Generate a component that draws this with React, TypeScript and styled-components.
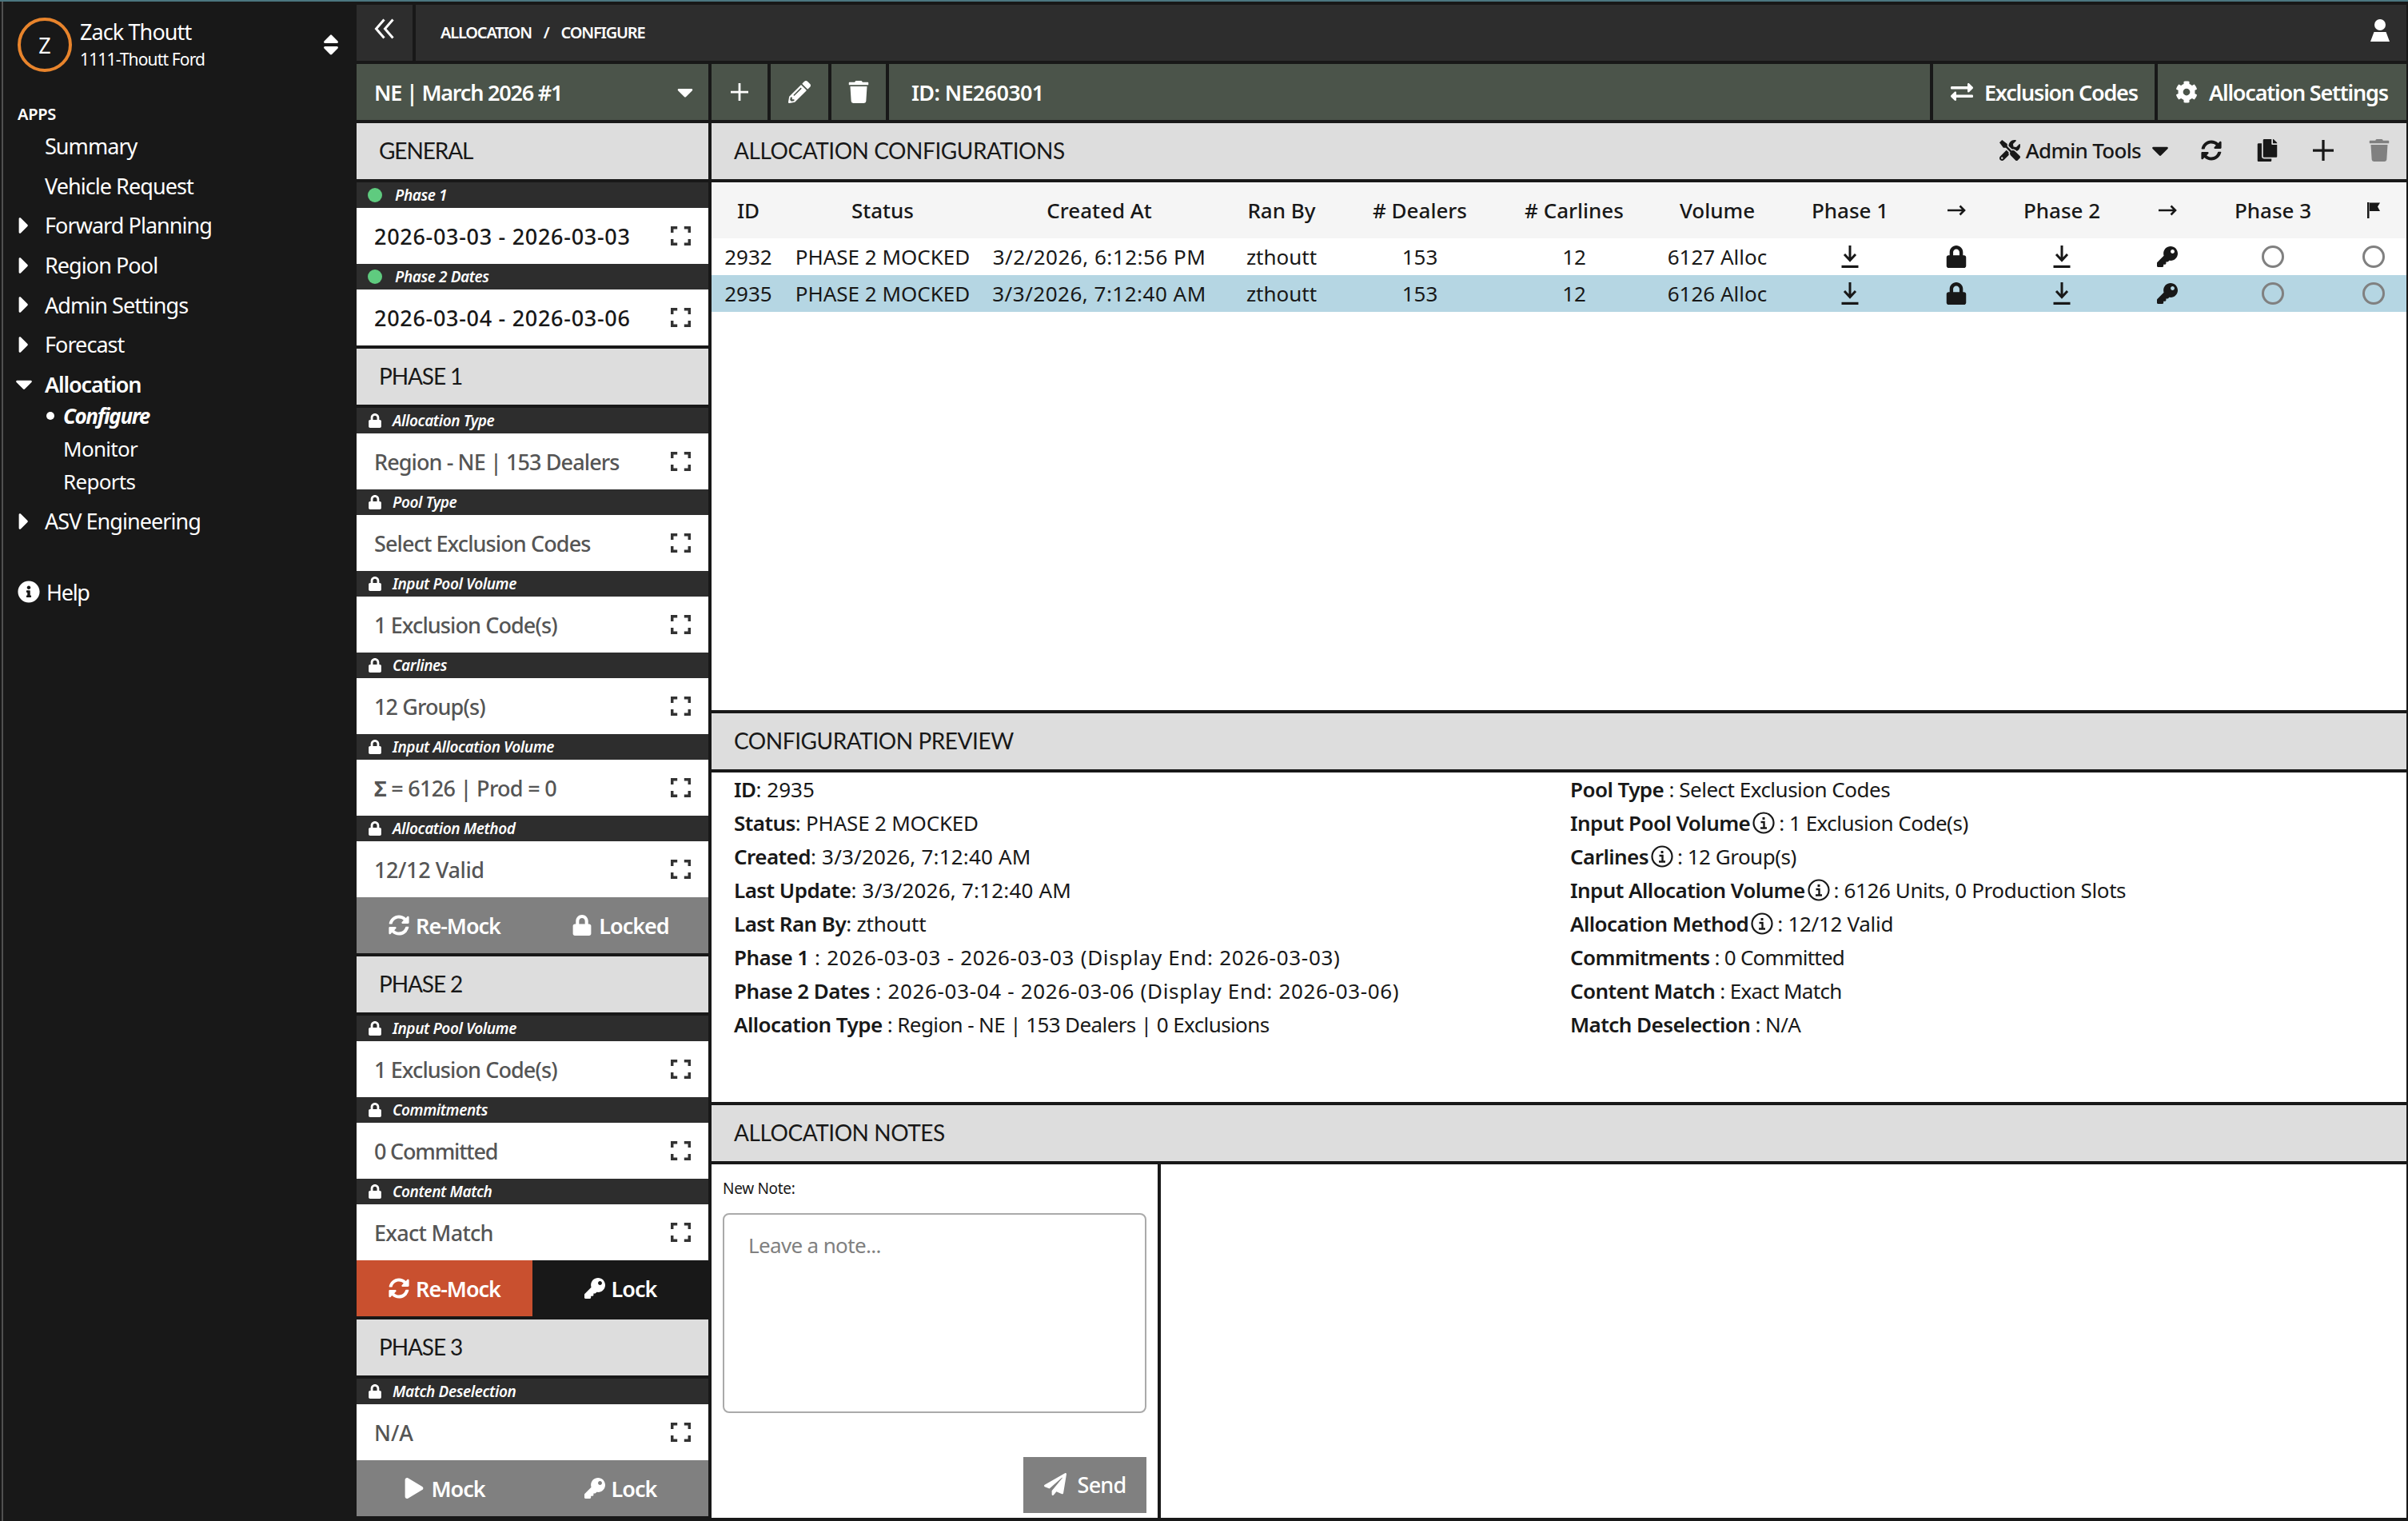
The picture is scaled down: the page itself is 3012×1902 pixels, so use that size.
import { FC, ReactNode } from "react";
import styled, { createGlobalStyle } from "styled-components";
import {
  FaCaretDown,
  FaCaretRight,
  FaCog,
  FaCopy,
  FaExchangeAlt,
  FaInfoCircle,
  FaKey,
  FaLock,
  FaPaperPlane,
  FaPencilAlt,
  FaPlay,
  FaSort,
  FaSyncAlt,
  FaTools,
  FaTrash,
} from "react-icons/fa";

const GlobalStyle = createGlobalStyle`
  html, body {
    margin: 0;
    padding: 0;
    background: #181818;
  }
  body {
    font-family: "Noto Sans", "Open Sans", sans-serif;
    overflow: hidden;
  }
  * {
    box-sizing: border-box;
  }
`;

const Page = styled.div`
  width: 3012px;
  height: 1902px;
  display: flex;
  flex-direction: column;
  background: #181818;
  overflow: hidden;
`;

const AccentStrip = styled.div`
  height: 2px;
  flex: none;
  background: #4b7680;
`;

const Shell = styled.div`
  flex: 1;
  display: flex;
  min-height: 0;
`;

const EdgeStrip = styled.div`
  width: 4px;
  flex: none;
  border-left: 2px solid #181818;
  background: #505050;
`;

const Sidebar = styled.nav`
  width: 442px;
  flex: none;
  padding-top: 20px;
  color: #fff;
`;

const Profile = styled.div`
  display: flex;
  align-items: center;
  height: 68px;
  padding: 0 22px 0 18px;
`;

const Avatar = styled.div`
  width: 68px;
  height: 68px;
  flex: none;
  border: 4px solid #e8842c;
  border-radius: 50%;
  display: flex;
  align-items: center;
  justify-content: center;
  font-size: 27px;
`;

const ProfileText = styled.div`
  flex: 1;
  margin-left: 10px;
`;

const ProfileName = styled.div`
  font-size: 27px;
  line-height: 36px;
  letter-spacing: -0.9px;
`;

const ProfileOrg = styled.div`
  font-size: 21px;
  line-height: 32px;
  letter-spacing: -0.85px;
`;

const SortIcon = styled(FaSort)`
  width: 20px;
  height: 32px;
  flex: none;
`;

const SectionLabel = styled.div`
  margin: 39px 0 0 18px;
  height: 28px;
  line-height: 28px;
  font-size: 20px;
  font-weight: 600;
  letter-spacing: -0.3px;
`;

const MenuList = styled.div`
  margin-top: 1px;
`;

const MenuItem = styled.div<{ $active?: boolean }>`
  height: 49.6px;
  display: flex;
  align-items: center;
  font-size: 27px;
  letter-spacing: ${(p) => (p.$active ? "-1.15px" : "-0.95px")};
  font-weight: ${(p) => (p.$active ? 600 : 400)};
`;

const MenuCaret = styled.span`
  width: 52px;
  flex: none;
  display: flex;
  padding-left: 15px;
  svg {
    width: 22px;
    height: 34px;
    display: block;
  }
`;

const SubList = styled.div`
  margin: -6px 0 5px;
`;

const SubItem = styled.div<{ $active?: boolean }>`
  height: 41px;
  padding-left: 75px;
  display: flex;
  align-items: center;
  font-size: 26px;
  letter-spacing: ${(p) => (p.$active ? "-1.4px" : "-0.7px")};
  font-style: ${(p) => (p.$active ? "italic" : "normal")};
  font-weight: ${(p) => (p.$active ? 700 : 400)};
  position: relative;
  &::before {
    content: "";
    display: ${(p) => (p.$active ? "block" : "none")};
    position: absolute;
    left: 54px;
    top: 16px;
    width: 10px;
    height: 10px;
    border-radius: 50%;
    background: #fff;
  }
`;

const HelpRow = styled.div`
  margin: 45px 0 0 18px;
  display: flex;
  align-items: center;
  font-size: 27px;
  letter-spacing: -1.3px;
  svg {
    width: 28px;
    height: 28px;
    margin-right: 8px;
  }
`;

const Content = styled.main`
  flex: 1;
  min-width: 0;
  padding: 4px 2px 4px 0;
  display: flex;
  flex-direction: column;
  gap: 4px;
`;

const BarRow = styled.div`
  height: 70px;
  flex: none;
  display: flex;
  gap: 4px;
`;

const DarkBlock = styled.div<{ $w?: number }>`
  ${(p) => (p.$w ? `width: ${p.$w}px; flex: none;` : "flex: 1;")}
  background: #2d2d2d;
  color: #fff;
  display: flex;
  align-items: center;
`;

const CollapseIcon = styled.svg`
  width: 26px;
  height: 26px;
  margin: -10px 0 0 22px;
  fill: none;
  stroke: #fff;
  stroke-width: 3;
`;

const Crumbs = styled.div`
  flex: 1;
  padding-left: 31px;
  display: flex;
  gap: 15px;
  font-size: 20px;
  font-weight: 600;
  letter-spacing: -1.2px;
  text-transform: uppercase;
  margin-top: -2px;
`;

const UserIcon = styled.svg`
  width: 24px;
  height: 28px;
  margin-right: 21px;
  margin-top: -6px;
  fill: #fff;
`;

const GreenBlock = styled.div<{ $w?: number; $center?: boolean }>`
  ${(p) => (p.$w ? `width: ${p.$w}px; flex: none;` : "flex: 1;")}
  background: #4b544a;
  color: #fff;
  display: flex;
  align-items: center;
  justify-content: ${(p) => (p.$center ? "center" : "flex-start")};
  font-size: 27px;
  font-weight: 600;
  letter-spacing: -1.2px;
  svg {
    flex: none;
  }
`;

const SelectValue = styled.span`
  flex: 1;
  padding-left: 22px;
`;

const SelectCaret = styled(FaCaretDown)`
  width: 20px;
  height: 32px;
  margin-right: 19px;
`;

const IdValue = styled.span`
  padding-left: 28px;
  letter-spacing: -0.65px;
`;

const ActionIcon = styled.span`
  display: flex;
  margin: 0 14px 0 22px;
  svg {
    width: 28px;
    height: 28px;
  }
`;

const ThinPlus = styled.svg<{ $size: number }>`
  width: ${(p) => p.$size}px;
  height: ${(p) => p.$size}px;
  fill: none;
  stroke: currentColor;
  stroke-width: 3;
`;

const Columns = styled.div`
  flex: 1;
  min-height: 0;
  display: flex;
  gap: 4px;
`;

const LeftPanel = styled.aside`
  width: 440px;
  flex: none;
  display: flex;
  flex-direction: column;
`;

const MainPanel = styled.section`
  flex: 1;
  min-width: 0;
  display: flex;
  flex-direction: column;
  gap: 4px;
`;

const SectionHeader = styled.div<{ $gapTop?: boolean }>`
  height: 70px;
  flex: none;
  margin-top: ${(p) => (p.$gapTop ? "4px" : "0")};
  margin-bottom: 4px;
  padding: 0 0 2px 28px;
  background: #ddd;
  color: #181818;
  display: flex;
  align-items: center;
  font-family: "Lato", "Noto Sans", sans-serif;
  font-size: 28px;
  letter-spacing: -1.1px;
  text-transform: uppercase;
`;

const PanelHeader = styled.div`
  height: 70px;
  flex: none;
  background: #ddd;
  color: #181818;
  display: flex;
  align-items: center;
  padding: 0 21px 2px 28px;
  font-family: "Lato", "Noto Sans", sans-serif;
  font-size: 28px;
  letter-spacing: -0.45px;
  text-transform: uppercase;
`;

const PanelTitle = styled.span`
  flex: 1;
`;

const Tools = styled.div`
  display: flex;
  align-items: center;
  font-family: "Noto Sans", sans-serif;
  text-transform: none;
  font-size: 26px;
  font-weight: 500;
  letter-spacing: -0.7px;
`;

const ToolLabel = styled.span`
  margin-left: 7px;
`;

const ToolCaret = styled(FaCaretDown)`
  width: 22px;
  height: 34px;
  margin-left: 13px;
`;

const ToolButton = styled.span<{ $gap?: number; $muted?: boolean }>`
  display: flex;
  width: 26px;
  justify-content: center;
  margin-left: ${(p) => p.$gap ?? 44}px;
  color: ${(p) => (p.$muted ? "#808080" : "#181818")};
  svg {
    width: 26px;
    height: 28px;
  }
`;

const FieldLabel = styled.div`
  height: 32px;
  flex: none;
  background: #2d2d2d;
  color: #fff;
  display: flex;
  align-items: center;
  padding-left: 14px;
  font-size: 19px;
  font-style: italic;
  font-weight: 600;
  letter-spacing: -0.4px;
`;

const StatusDot = styled.span`
  width: 18px;
  height: 18px;
  border-radius: 50%;
  background: #5fcb7f;
  margin-right: 16px;
`;

const LabelLock = styled(FaLock)`
  width: 18px;
  height: 18px;
  margin-right: 13px;
`;

const FieldValue = styled.div<{ $dark?: boolean; $spacing: number }>`
  height: 70px;
  flex: none;
  background: #fff;
  color: ${(p) => (p.$dark ? "#181818" : "#555")};
  display: flex;
  align-items: center;
  justify-content: space-between;
  padding: 0 22px 0 22px;
  font-size: 27px;
  font-weight: 500;
  letter-spacing: ${(p) => p.$spacing}px;
`;

const ExpandIcon = styled.svg`
  width: 25px;
  height: 24px;
  fill: none;
  stroke: #333;
  stroke-width: 3.5;
`;

const ButtonRow = styled.div`
  height: 70px;
  flex: none;
  display: flex;
`;

const PhaseButton = styled.div<{ $tone: "grey" | "red" | "black" }>`
  flex: 1;
  display: flex;
  align-items: center;
  justify-content: center;
  gap: 8px;
  color: #fff;
  font-size: 27px;
  font-weight: 600;
  letter-spacing: -1px;
  background: ${(p) =>
    p.$tone === "red" ? "#c9502f" : p.$tone === "black" ? "#181818" : "#808080"};
  svg {
    width: 26px;
    height: 26px;
  }
`;

const TableBlock = styled.div`
  height: 660px;
  flex: none;
  background: #fff;
`;

const columns =
  "92px 244px 298px 158px 188px 198px 160px 172px 94px 170px 94px 170px 82px";

const HeadRow = styled.div`
  height: 70px;
  display: grid;
  grid-template-columns: ${columns};
  align-items: center;
  justify-items: center;
  background: #f5f5f5;
  color: #181818;
  font-size: 26px;
  font-weight: 500;
`;

const BodyRow = styled.div<{ $selected?: boolean }>`
  height: 46px;
  display: grid;
  grid-template-columns: ${columns};
  align-items: center;
  justify-items: center;
  background: ${(p) => (p.$selected ? "#b5d6e3" : "#fff")};
  color: #181818;
  font-size: 26px;
`;

const DateCell = styled.span`
  letter-spacing: 0.5px;
`;

const CellIcon = styled.span`
  display: flex;
  svg {
    width: 26px;
    height: 28px;
  }
`;

const EmptyCircle = styled.span`
  width: 28px;
  height: 28px;
  border: 3px solid #808080;
  border-radius: 50%;
`;

const PreviewBody = styled.div`
  height: 412px;
  flex: none;
  background: #fff;
  color: #181818;
  display: grid;
  grid-template-columns: 1fr 1fr;
  padding: 0 14px;
  font-size: 26px;
  line-height: 42px;
`;

const PreviewColumn = styled.div`
  padding-left: 14px;
`;

const PreviewLine = styled.div<{ $spacing?: number }>`
  display: flex;
  align-items: center;
  white-space: pre;
  height: 42px;
  letter-spacing: ${(p) => p.$spacing ?? -0.5}px;
  b {
    font-weight: 600;
    letter-spacing: -0.55px;
  }
`;

const InfoOutline = styled.svg`
  width: 28px;
  height: 28px;
  margin: 0 5px 0 3px;
  fill: none;
  stroke: #181818;
`;

const NotesBody = styled.div`
  height: 442px;
  flex: none;
  display: flex;
  background: #fff;
`;

const NoteForm = styled.form`
  width: 562px;
  flex: none;
  border-right: 4px solid #181818;
  padding: 0 14px 6px 14px;
  display: flex;
  flex-direction: column;
`;

const NoteLabel = styled.label`
  height: 61px;
  flex: none;
  padding-bottom: 2px;
  display: flex;
  align-items: center;
  color: #181818;
  font-size: 19px;
  letter-spacing: -0.3px;
`;

const NoteArea = styled.textarea`
  width: 530px;
  height: 250px;
  flex: none;
  resize: none;
  border: 2px solid #aaa;
  border-radius: 8px;
  padding: 20px 30px;
  outline: none;
  font-family: "Noto Sans", sans-serif;
  font-size: 26px;
  letter-spacing: -0.65px;
  &::placeholder {
    color: #808080;
  }
`;

const SendButton = styled.button`
  width: 154px;
  height: 70px;
  margin: auto 0 0 auto;
  padding: 0 0 2px;
  border: 0;
  background: #808080;
  color: #fff;
  display: flex;
  align-items: center;
  justify-content: center;
  gap: 14px;
  font-family: "Noto Sans", sans-serif;
  font-size: 27px;
  font-weight: 500;
  letter-spacing: -0.8px;
  svg {
    width: 28px;
    height: 28px;
  }
`;

const Expand = () => (
  <ExpandIcon viewBox="0 0 25 24">
    <path d="M1.7 8V1.7h6.5M16.8 1.7h6.5V8M23.3 16v6.3h-6.5M8.2 22.3H1.7V16" />
  </ExpandIcon>
);

const Field: FC<{
  label: string;
  value: ReactNode;
  dot?: boolean;
  dark?: boolean;
  spacing?: number;
}> = ({ label, value, dot, dark, spacing = -0.9 }) => (
  <>
    <FieldLabel>
      {dot ? <StatusDot /> : <LabelLock />}
      {label}
    </FieldLabel>
    <FieldValue $dark={dark} $spacing={spacing}>
      <span>{value}</span>
      <Expand />
    </FieldValue>
  </>
);

const Plus: FC<{ size: number }> = ({ size }) => (
  <ThinPlus $size={size} viewBox="0 0 24 24">
    <path d="M12 0v24M0 12h24" />
  </ThinPlus>
);

const DownloadIcon = () => (
  <svg viewBox="0 0 26 28" fill="none" stroke="currentColor" strokeWidth="3">
    <path d="M13 0v18M6 11l7 7.500 7-7.500" />
    <path d="M2.500 26.500h21" strokeWidth="3.400" />
  </svg>
);

const ArrowIcon = () => (
  <svg viewBox="0 0 26 28" fill="none" stroke="currentColor" strokeWidth="2.600">
    <path d="M2 14h21M17.500 8.500l5.500 5.500-5.500 5.500" />
  </svg>
);

const FlagIcon = () => (
  <svg viewBox="0 0 26 28" fill="currentColor">
    <path d="M5 4h2.500v20H5zM8 4.500h13l-3 5 3 5.500H8z" />
  </svg>
);

const Info = () => (
  <InfoOutline viewBox="0 0 28 28">
    <circle cx="14" cy="14" r="12.500" strokeWidth="2.200" />
    <path d="M14 7v3" strokeWidth="3" />
    <path d="M10.500 13h4v7M10 20.500h8" strokeWidth="2.400" />
  </InfoOutline>
);

const rows = [
  { id: "2932", created: "3/2/2026, 6:12:56 PM", volume: "6127 Alloc" },
  { id: "2935", created: "3/3/2026, 7:12:40 AM", volume: "6126 Alloc", selected: true },
];

const App = () => (
  <Page>
    <GlobalStyle />
    <AccentStrip />
    <Shell>
      <EdgeStrip />
      <Sidebar>
        <Profile>
          <Avatar>Z</Avatar>
          <ProfileText>
            <ProfileName>Zack Thoutt</ProfileName>
            <ProfileOrg>1111-Thoutt Ford</ProfileOrg>
          </ProfileText>
          <SortIcon />
        </Profile>
        <SectionLabel>APPS</SectionLabel>
        <MenuList>
          <MenuItem>
            <MenuCaret />
            Summary
          </MenuItem>
          <MenuItem>
            <MenuCaret />
            Vehicle Request
          </MenuItem>
          {["Forward Planning", "Region Pool", "Admin Settings", "Forecast"].map((item) => (
            <MenuItem key={item}>
              <MenuCaret>
                <FaCaretRight />
              </MenuCaret>
              {item}
            </MenuItem>
          ))}
          <MenuItem $active>
            <MenuCaret>
              <FaCaretDown />
            </MenuCaret>
            Allocation
          </MenuItem>
          <SubList>
            <SubItem $active>Configure</SubItem>
            <SubItem>Monitor</SubItem>
            <SubItem>Reports</SubItem>
          </SubList>
          <MenuItem>
            <MenuCaret>
              <FaCaretRight />
            </MenuCaret>
            ASV Engineering
          </MenuItem>
        </MenuList>
        <HelpRow>
          <FaInfoCircle />
          Help
        </HelpRow>
      </Sidebar>
      <Content>
        <BarRow>
          <DarkBlock $w={70}>
            <CollapseIcon viewBox="0 0 26 26">
              <path d="M12.500 1.500L2.500 13l10 11.500M23.500 1.500L13.500 13l10 11.500" />
            </CollapseIcon>
          </DarkBlock>
          <DarkBlock>
            <Crumbs>
              <span>Allocation</span>
              <span>/</span>
              <span>Configure</span>
            </Crumbs>
            <UserIcon viewBox="0 0 24 28">
              <circle cx="12" cy="7" r="7" />
              <polygon points="4.500,16 19.500,16 24,28 0,28" />
            </UserIcon>
          </DarkBlock>
        </BarRow>
        <BarRow>
          <GreenBlock $w={440}>
            <SelectValue>NE | March 2026 #1</SelectValue>
            <SelectCaret />
          </GreenBlock>
          <GreenBlock $w={70} $center>
            <Plus size={22} />
          </GreenBlock>
          <GreenBlock $w={72} $center>
            <FaPencilAlt size={28} />
          </GreenBlock>
          <GreenBlock $w={68} $center>
            <FaTrash size={28} />
          </GreenBlock>
          <GreenBlock>
            <IdValue>ID: NE260301</IdValue>
          </GreenBlock>
          <GreenBlock $w={277}>
            <ActionIcon>
              <FaExchangeAlt />
            </ActionIcon>
            Exclusion Codes
          </GreenBlock>
          <GreenBlock $w={311}>
            <ActionIcon>
              <FaCog />
            </ActionIcon>
            Allocation Settings
          </GreenBlock>
        </BarRow>
        <Columns>
          <LeftPanel>
            <SectionHeader>General</SectionHeader>
            <Field dot dark spacing={0.7} label="Phase 1" value="2026-03-03 - 2026-03-03" />
            <Field dot dark spacing={0.7} label="Phase 2 Dates" value="2026-03-04 - 2026-03-06" />
            <SectionHeader $gapTop>Phase 1</SectionHeader>
            <Field label="Allocation Type" value="Region - NE | 153 Dealers" />
            <Field label="Pool Type" value="Select Exclusion Codes" />
            <Field label="Input Pool Volume" value="1 Exclusion Code(s)" />
            <Field label="Carlines" value="12 Group(s)" />
            <Field
              label="Input Allocation Volume"
              spacing={-0.7}
              value={
                <>
                  <b>Σ</b> = 6126 | Prod = 0
                </>
              }
            />
            <Field label="Allocation Method" spacing={-0.4} value="12/12 Valid" />
            <ButtonRow>
              <PhaseButton $tone="grey">
                <FaSyncAlt />
                Re-Mock
              </PhaseButton>
              <PhaseButton $tone="grey">
                <FaLock />
                Locked
              </PhaseButton>
            </ButtonRow>
            <SectionHeader $gapTop>Phase 2</SectionHeader>
            <Field label="Input Pool Volume" value="1 Exclusion Code(s)" />
            <Field label="Commitments" spacing={-1.2} value="0 Committed" />
            <Field label="Content Match" spacing={-0.7} value="Exact Match" />
            <ButtonRow>
              <PhaseButton $tone="red">
                <FaSyncAlt />
                Re-Mock
              </PhaseButton>
              <PhaseButton $tone="black">
                <FaKey />
                Lock
              </PhaseButton>
            </ButtonRow>
            <SectionHeader $gapTop>Phase 3</SectionHeader>
            <Field label="Match Deselection" spacing={0} value="N/A" />
            <ButtonRow>
              <PhaseButton $tone="grey">
                <FaPlay />
                Mock
              </PhaseButton>
              <PhaseButton $tone="grey">
                <FaKey />
                Lock
              </PhaseButton>
            </ButtonRow>
          </LeftPanel>
          <MainPanel>
            <PanelHeader>
              <PanelTitle>Allocation Configurations</PanelTitle>
              <Tools>
                <ToolButton $gap={0}>
                  <FaTools />
                </ToolButton>
                <ToolLabel>Admin Tools</ToolLabel>
                <ToolCaret />
                <ToolButton $gap={40}>
                  <FaSyncAlt />
                </ToolButton>
                <ToolButton>
                  <FaCopy />
                </ToolButton>
                <ToolButton>
                  <Plus size={24} />
                </ToolButton>
                <ToolButton $muted>
                  <FaTrash />
                </ToolButton>
              </Tools>
            </PanelHeader>
            <TableBlock>
              <HeadRow>
                <span>ID</span>
                <span>Status</span>
                <span>Created At</span>
                <span>Ran By</span>
                <span># Dealers</span>
                <span># Carlines</span>
                <span>Volume</span>
                <span>Phase 1</span>
                <CellIcon>
                  <ArrowIcon />
                </CellIcon>
                <span>Phase 2</span>
                <CellIcon>
                  <ArrowIcon />
                </CellIcon>
                <span>Phase 3</span>
                <CellIcon>
                  <FlagIcon />
                </CellIcon>
              </HeadRow>
              {rows.map((row) => (
                <BodyRow key={row.id} $selected={row.selected}>
                  <span>{row.id}</span>
                  <span>PHASE 2 MOCKED</span>
                  <DateCell>{row.created}</DateCell>
                  <span>zthoutt</span>
                  <span>153</span>
                  <span>12</span>
                  <span>{row.volume}</span>
                  <CellIcon>
                    <DownloadIcon />
                  </CellIcon>
                  <CellIcon>
                    <FaLock />
                  </CellIcon>
                  <CellIcon>
                    <DownloadIcon />
                  </CellIcon>
                  <CellIcon>
                    <FaKey />
                  </CellIcon>
                  <EmptyCircle />
                  <EmptyCircle />
                </BodyRow>
              ))}
            </TableBlock>
            <PanelHeader>
              <PanelTitle>Configuration Preview</PanelTitle>
            </PanelHeader>
            <PreviewBody>
              <PreviewColumn>
                <PreviewLine $spacing={0}>
                  <b>ID</b>: 2935
                </PreviewLine>
                <PreviewLine $spacing={-0.2}>
                  <b>Status</b>: PHASE 2 MOCKED
                </PreviewLine>
                <PreviewLine $spacing={0.2}>
                  <b>Created</b>: 3/3/2026, 7:12:40 AM
                </PreviewLine>
                <PreviewLine $spacing={0.2}>
                  <b>Last Update</b>: 3/3/2026, 7:12:40 AM
                </PreviewLine>
                <PreviewLine $spacing={-0.2}>
                  <b>Last Ran By</b>: zthoutt
                </PreviewLine>
                <PreviewLine $spacing={0.72}>
                  <b>Phase 1</b> : 2026-03-03 - 2026-03-03 (Display End: 2026-03-03)
                </PreviewLine>
                <PreviewLine $spacing={0.67}>
                  <b>Phase 2 Dates</b> : 2026-03-04 - 2026-03-06 (Display End: 2026-03-06)
                </PreviewLine>
                <PreviewLine $spacing={-0.6}>
                  <b>Allocation Type</b> : Region - NE | 153 Dealers | 0 Exclusions
                </PreviewLine>
              </PreviewColumn>
              <PreviewColumn>
                <PreviewLine>
                  <b>Pool Type</b> : Select Exclusion Codes
                </PreviewLine>
                <PreviewLine>
                  <b>Input Pool Volume</b>
                  <Info />: 1 Exclusion Code(s)
                </PreviewLine>
                <PreviewLine>
                  <b>Carlines</b>
                  <Info />: 12 Group(s)
                </PreviewLine>
                <PreviewLine $spacing={-0.4}>
                  <b>Input Allocation Volume</b>
                  <Info />: 6126 Units, 0 Production Slots
                </PreviewLine>
                <PreviewLine $spacing={-0.3}>
                  <b>Allocation Method</b>
                  <Info />: 12/12 Valid
                </PreviewLine>
                <PreviewLine $spacing={-0.75}>
                  <b>Commitments</b> : 0 Committed
                </PreviewLine>
                <PreviewLine $spacing={-0.7}>
                  <b>Content Match</b> : Exact Match
                </PreviewLine>
                <PreviewLine $spacing={-0.6}>
                  <b>Match Deselection</b> : N/A
                </PreviewLine>
              </PreviewColumn>
            </PreviewBody>
            <PanelHeader>
              <PanelTitle>Allocation Notes</PanelTitle>
            </PanelHeader>
            <NotesBody>
              <NoteForm>
                <NoteLabel>New Note:</NoteLabel>
                <NoteArea placeholder="Leave a note..." />
                <SendButton type="button">
                  <FaPaperPlane />
                  Send
                </SendButton>
              </NoteForm>
            </NotesBody>
          </MainPanel>
        </Columns>
      </Content>
    </Shell>
  </Page>
);

export default App;
